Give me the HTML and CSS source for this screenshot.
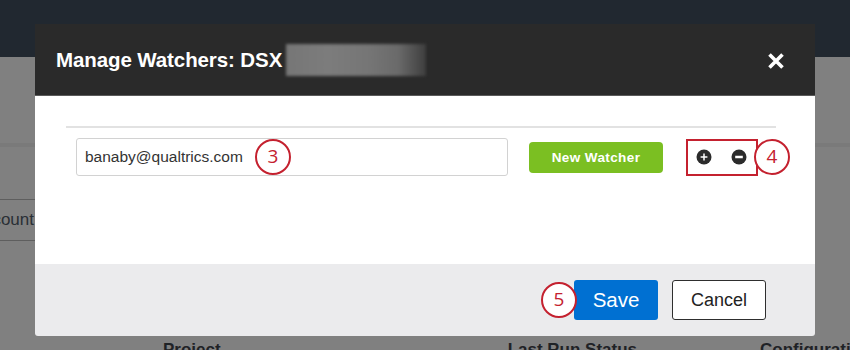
FILE: index.html
```html
<!DOCTYPE html>
<html>
<head>
<meta charset="utf-8">
<link rel="stylesheet" href="styles.css">
</head>
<body>
<div class="page">
  <div class="topbar"></div>
  <div class="content">
    <div class="band"></div>
    <div class="leftcell">
      <div class="rowline"></div>
      <div class="count">Account</div>
      <div class="rowline"></div>
    </div>
    <div class="cols">
      <span class="col c1">Project</span>
      <span class="col c2">Last Run Status</span>
      <span class="col c3">Configuration</span>
    </div>
  </div>

  <div class="modal">
    <div class="mhead">
      <span class="mtitle">Manage Watchers: DSX</span>
      <span class="blur"></span>
      <span class="close">
        <svg width="18" height="18" viewBox="0 0 18 18"><path d="M2.5 2.5 L15.5 15.5 M15.5 2.5 L2.5 15.5" stroke="#fff" stroke-width="3.6" stroke-linecap="butt"/></svg>
      </span>
    </div>
    <div class="mbody">
      <div class="divider"></div>
      <div class="row">
        <div class="input">banaby@qualtrics.com<span class="ann ann3">3</span></div>
        <button class="green">New Watcher</button>
        <div class="iconbox">
          <svg width="16" height="16" viewBox="0 0 16 16"><circle cx="8" cy="8" r="7.5" fill="#2b2b2b"/><path d="M8 4.6V11.4M4.6 8H11.4" stroke="#fff" stroke-width="1.5"/></svg>
          <svg width="16" height="16" viewBox="0 0 16 16"><circle cx="8" cy="8" r="7.5" fill="#2b2b2b"/><path d="M4.2 8H11.8" stroke="#fff" stroke-width="2.6"/></svg>
          <span class="ann ann4">4</span>
        </div>
      </div>
    </div>
    <div class="mfoot">
      <button class="save">Save<span class="ann ann5">5</span></button>
      <button class="cancel">Cancel</button>
    </div>
  </div>
</div>
</body>
</html>
```

FILE: styles.css
```css
html, body {
  margin: 0;
  padding: 0;
}
body {
  width: 850px;
  height: 350px;
  overflow: hidden;
  font-family: "Liberation Sans", Arial, sans-serif;
}
.page {
  position: relative;
  width: 850px;
  height: 350px;
  overflow: hidden;
  background: #808080;
}
.topbar {
  height: 57px;
  background: #212830;
}
.content {
  position: relative;
  height: 293px;
  overflow: hidden;
}
.band {
  margin-top: 86px;
  height: 4px;
  background: #7a7a7a;
}
.leftcell {
  margin-top: 52px;
  width: 35px;
  overflow: hidden;
  white-space: nowrap;
  display: flex;
  flex-direction: column;
  align-items: flex-end;
}
.rowline {
  width: 35px;
  height: 1px;
  background: #5e5e5e;
}
.count {
  height: 40px;
  line-height: 40px;
  font-size: 17px;
  color: #2a2f35;
  margin-right: 1px;
}
.cols {
  display: flex;
  margin-top: 99px;
  font-weight: bold;
  font-size: 17px;
  color: #1f2226;
  white-space: nowrap;
}
.c1 { margin-left: 163px; }
.c2 { margin-left: 287px; }
.c3 { margin-left: 123px; }

.modal {
  position: absolute;
  left: 35px;
  top: 24px;
  width: 780px;
  height: 312px;
  display: flex;
  flex-direction: column;
  border-radius: 0 0 3px 3px;
  overflow: hidden;
}
.mhead {
  height: 71px;
  background: #2a2a2a;
  border-bottom: 1px solid #5a5a5a;
  display: flex;
  align-items: center;
  padding-left: 21px;
  padding-right: 30px;
  flex-shrink: 0;
}
.mtitle {
  color: #fff;
  font-weight: bold;
  font-size: 20.5px;
  letter-spacing: -0.1px;
}
.blur {
  width: 140px;
  height: 32px;
  margin-left: 4px;
  margin-top: 1px;
  background: linear-gradient(90deg, #767676 0%, #7c7c7c 30%, #757575 60%, #6a6a6a 80%, #3e3e3e 100%);
  filter: blur(1.5px);
}
.close {
  margin-left: auto;
  margin-top: 3px;
  display: flex;
}
.mbody {
  height: 168px;
  background: #fff;
  padding: 30px 39px 0 31px;
  box-sizing: border-box;
  flex-shrink: 0;
}
.divider {
  height: 2px;
  background: #e2e2e2;
}
.row {
  display: flex;
  align-items: center;
  margin-top: 10px;
  padding-left: 10px;
}
.input {
  position: relative;
  width: 432px;
  height: 38px;
  box-sizing: border-box;
  border: 1px solid #d2d2d2;
  border-radius: 3px;
  padding-left: 8px;
  line-height: 36px;
  font-size: 15.5px;
  color: #333;
}
.green {
  margin-left: 21px;
  width: 134px;
  height: 31px;
  border: none;
  border-radius: 4px;
  background: #7bbf22;
  color: #fff;
  font-family: "Liberation Sans", Arial, sans-serif;
  font-weight: bold;
  font-size: 13.5px;
  letter-spacing: 0.4px;
  padding: 0;
}
.iconbox {
  position: relative;
  margin-left: 23px;
  width: 72px;
  height: 37px;
  box-sizing: border-box;
  border: 2.5px solid #c4212f;
  display: flex;
  align-items: center;
  padding-left: 8px;
  gap: 19px;
}
.ann {
  position: absolute;
  width: 36px;
  height: 36px;
  box-sizing: border-box;
  border: 2.5px solid #c4212f;
  border-radius: 50%;
  background: #fff;
  color: #c4212f;
  font-family: "Open Sans", "Liberation Sans", sans-serif;
  font-size: 19px;
  font-weight: normal;
  line-height: 31px;
  text-align: center;
  letter-spacing: 0;
}
.ann3 {
  left: 178px;
  top: 0px;
}
.ann4 {
  left: 66px;
  top: -2px;
}
.mfoot {
  flex: 1;
  background: #ebebed;
  display: flex;
  justify-content: flex-end;
  align-items: flex-start;
  padding: 16px 49px 0 0;
}
.save {
  position: relative;
  width: 84px;
  height: 40px;
  border: none;
  border-radius: 3px;
  background: #0070d2;
  color: #fff;
  font-family: "Liberation Sans", Arial, sans-serif;
  font-size: 20.5px;
  padding: 0;
}
.ann5 {
  left: -33px;
  top: 2px;
}
.cancel {
  margin-left: 14px;
  width: 94px;
  height: 40px;
  border: 1px solid #2e2e2e;
  border-radius: 3px;
  background: #fff;
  color: #222;
  font-family: "Liberation Sans", Arial, sans-serif;
  font-size: 18px;
  padding: 0;
}
```
